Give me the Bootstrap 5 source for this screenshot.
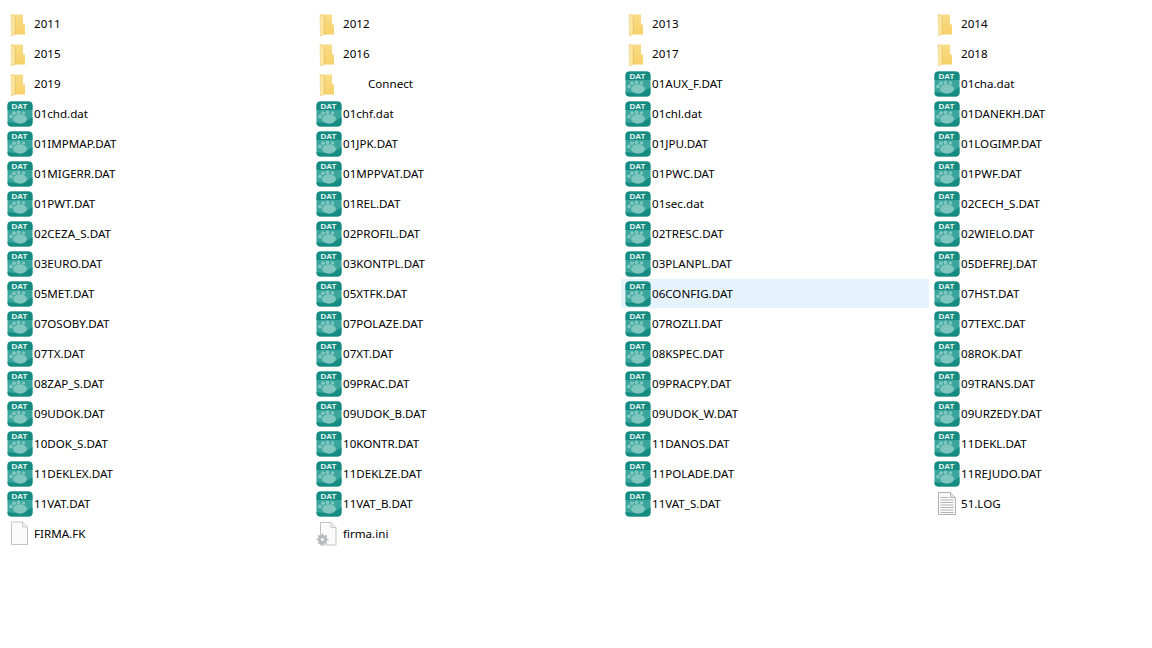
<!DOCTYPE html>
<html lang="en">
<head>
<meta charset="utf-8">
<title>Files</title>
<link rel="stylesheet" href="https://cdn.jsdelivr.net/npm/bootstrap@5.3.0/dist/css/bootstrap.min.css">
<style>
body { background: #fff; color: #000; font-family: "Noto Sans", "Open Sans", sans-serif; font-size: 11.6px; overflow: hidden; }
.file-grid { display: grid; grid-template-columns: repeat(3, 308px) 1fr; column-gap: 1px; row-gap: 1px; grid-auto-rows: 29px; padding: 9px 0 0 3px; }
.file-item { padding-left: 4px; white-space: nowrap; }
.file-item.is-hover { background: #e5f3ff; }
.file-ico { width: 26px; height: 26px; flex: none; margin-right: 1px; display: block; }
.file-wide { margin-left: 25px; }
.sprite { position: absolute; width: 0; height: 0; }
</style>
</head>
<body>
<svg class="sprite" aria-hidden="true">
<defs>
<linearGradient id="gf" x1="0" y1="0" x2="0" y2="1"><stop offset="0" stop-color="#f9dd88"/><stop offset="1" stop-color="#f7d068"/></linearGradient>
<symbol id="folder" viewBox="0 0 26 26">
<path d="M4 3.500H16V13.500H18V23.500H8z" fill="url(#gf)"/>
<path d="M8 6V23.500" stroke="#e6bd5c" stroke-width=".8"/>
<path d="M4 3.500 8 5.500V23.500L4.500 25z" fill="#fce6a0" stroke="#e6c678" stroke-width=".5"/>
</symbol>
<symbol id="dat" viewBox="0 0 26 26">
<rect x="0.500" y="0.500" width="25" height="25" rx="4" fill="#3aa59c"/>
<path d="M.5 9V4.500a4 4 0 0 1 4-4h17a4 4 0 0 1 4 4V9z" fill="#168b81"/>
<path d="M.5 21c6 1.500 18 1.500 25 -5v5.500a4 4 0 0 1-4 4h-17a4 4 0 0 1-4-4z" fill="#168b81"/>
<text x="12.500" y="7.500" text-anchor="middle" font-family="Liberation Sans, sans-serif" font-size="8" font-weight="700" fill="#e9f6f4">DAT</text>
<g fill="#7fc6bf">
<ellipse cx="13" cy="18" rx="7" ry="4.700"/>
<circle cx="4" cy="15.500" r="1.900"/><circle cx="7" cy="12.200" r="2"/><circle cx="11.500" cy="11.500" r="1.900"/><circle cx="16.500" cy="12" r="1.800"/>
</g>
</symbol>
<symbol id="blank" viewBox="0 0 26 26">
<path d="M4.500 1h11l5 5v17.500h-16z" fill="#fbfbfb" stroke="#c4c4c4"/>
<path d="M15.500 1v5h5" fill="#eee" stroke="#cbcbcb"/>
</symbol>
<symbol id="log" viewBox="0 0 26 26">
<path d="M4.500 1.500h12l5 5v17h-17z" fill="#fafafa" stroke="#b0b0b0"/>
<path d="M16.500 1.500v5h5" fill="#e6e6e6" stroke="#b0b0b0"/>
<path d="M6.500 6.500h8M6.500 9h13M6.500 11.500h13M6.500 14h13M6.500 16.500h13M6.500 19h13M6.500 21.500h13" stroke="#b4b4b4"/>
</symbol>
<symbol id="ini" viewBox="0 0 26 26">
<path d="M4.500 1.500h10.500l5 5v17.500h-15.500z" fill="#fbfbfb" stroke="#c2c2c2"/>
<path d="M15 1.500v5h5" fill="#eee" stroke="#c8c8c8"/>
<circle cx="6.500" cy="18.500" r="4.500" fill="#b4b9bc"/>
<path d="M6.500 12.500v12M.5 18.500h12M2.300 14.300l8.400 8.400M10.700 14.300l-8.400 8.400" stroke="#b4b9bc" stroke-width="1.700"/>
<circle cx="6.500" cy="18.500" r="1.800" fill="#eee"/>
</symbol>
</defs>
</svg>
<main class="file-grid" id="g"></main>
<script>
const names = "2011 2012 2013 2014 2015 2016 2017 2018 2019 Connect 01AUX_F.DAT 01cha.dat 01chd.dat 01chf.dat 01chl.dat 01DANEKH.DAT 01IMPMAP.DAT 01JPK.DAT 01JPU.DAT 01LOGIMP.DAT 01MIGERR.DAT 01MPPVAT.DAT 01PWC.DAT 01PWF.DAT 01PWT.DAT 01REL.DAT 01sec.dat 02CECH_S.DAT 02CEZA_S.DAT 02PROFIL.DAT 02TRESC.DAT 02WIELO.DAT 03EURO.DAT 03KONTPL.DAT 03PLANPL.DAT 05DEFREJ.DAT 05MET.DAT 05XTFK.DAT 06CONFIG.DAT 07HST.DAT 07OSOBY.DAT 07POLAZE.DAT 07ROZLI.DAT 07TEXC.DAT 07TX.DAT 07XT.DAT 08KSPEC.DAT 08ROK.DAT 08ZAP_S.DAT 09PRAC.DAT 09PRACPY.DAT 09TRANS.DAT 09UDOK.DAT 09UDOK_B.DAT 09UDOK_W.DAT 09URZEDY.DAT 10DOK_S.DAT 10KONTR.DAT 11DANOS.DAT 11DEKL.DAT 11DEKLEX.DAT 11DEKLZE.DAT 11POLADE.DAT 11REJUDO.DAT 11VAT.DAT 11VAT_B.DAT 11VAT_S.DAT 51.LOG FIRMA.FK firma.ini".split(" ");
const icon = n => /^\d{4}$|^Connect$/.test(n) ? "folder" : n === "51.LOG" ? "log" : n === "FIRMA.FK" ? "blank" : n === "firma.ini" ? "ini" : "dat";
document.getElementById("g").innerHTML = names.map(n =>
  `<div class="file-item d-flex align-items-center${n === "06CONFIG.DAT" ? " is-hover" : ""}"><svg class="file-ico" aria-hidden="true"><use href="#${icon(n)}"/></svg><span${n === "Connect" ? ' class="file-wide"' : ""}>${n}</span></div>`
).join("");
</script>
<script src="https://cdn.jsdelivr.net/npm/bootstrap@5.3.0/dist/js/bootstrap.bundle.min.js"></script>
</body>
</html>
